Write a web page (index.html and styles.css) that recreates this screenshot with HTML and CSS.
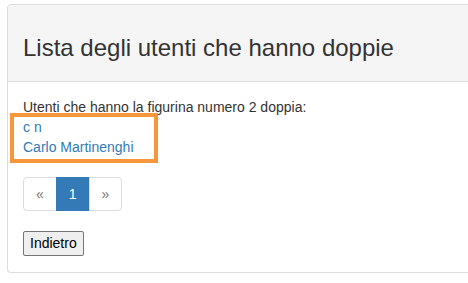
FILE: index.html
```html
<!DOCTYPE html>
<html lang="it">
<head>
<meta charset="utf-8">
<title>Lista degli utenti che hanno doppie</title>
<link rel="stylesheet" href="styles.css">
</head>
<body>
<div class="panel">
  <div class="panel-heading">
    <h3 class="panel-title">Lista degli utenti che hanno doppie</h3>
  </div>
  <div class="panel-body">
    <p class="intro">Utenti che hanno la figurina numero 2 doppia:</p>
    <div class="users">
      <a href="#" class="user">c n</a>
      <a href="#" class="user">Carlo Martinenghi</a>
      <div class="highlight"></div>
    </div>
    <ul class="pagination">
      <li class="page disabled"><span>&laquo;</span></li>
      <li class="page active"><span>1</span></li>
      <li class="page disabled"><span>&raquo;</span></li>
    </ul>
    <button class="back" type="button">Indietro</button>
  </div>
</div>
</body>
</html>
```
FILE: styles.css
```css
* { box-sizing: border-box; }
html, body { margin: 0; }
body {
  padding: 4px 0 0 7px;
  font-family: "Liberation Sans", Arial, sans-serif;
  font-size: 14px;
  line-height: 20px;
  color: #333;
  background: #fff;
  overflow: hidden;
}
.panel {
  width: 490px;
  border: 1px solid #ddd;
  border-radius: 4px;
  background: #fff;
  box-shadow: 0 1px 1px rgba(0,0,0,0.05);
}
.panel-heading {
  background: #f5f5f5;
  border-bottom: 1px solid #ddd;
  border-radius: 3px 3px 0 0;
  padding: 10px 15px;
}
.panel-title {
  margin: 20px 0 10px;
  font-size: 24px;
  line-height: 26.4px;
  font-weight: 500;
  color: #333;
}
.panel-body {
  padding: 15px 15px 16px;
}
.intro { margin: 0; }
.users {
  position: relative;
  display: flex;
  flex-direction: column;
  align-items: flex-start;
}
.user {
  color: #337ab7;
  text-decoration: none;
}
.highlight {
  position: absolute;
  left: -13px;
  top: -4px;
  width: 148px;
  height: 50px;
  border: 4px solid #f7963a;
}
.pagination {
  display: flex;
  list-style: none;
  margin: 20px 0;
  padding: 0;
}
.page span {
  display: block;
  padding: 6px 12px;
  line-height: 20px;
  border: 1px solid #ddd;
  margin-left: -1px;
  color: #777;
  background: #fff;
}
.page:first-child span {
  margin-left: 0;
  border-radius: 4px 0 0 4px;
}
.page:last-child span {
  border-radius: 0 4px 4px 0;
}
.page.active span {
  background: #337ab7;
  border-color: #337ab7;
  color: #fff;
  font-weight: normal;
}
.back {
  display: block;
  height: 25px;
  font-family: "Liberation Sans", Arial, sans-serif;
  font-size: 14px;
  line-height: 19px;
  color: #000;
  padding: 2px 6px;
  border: 1px solid #767676;
  border-radius: 2px;
  background: #efefef;
}
```
